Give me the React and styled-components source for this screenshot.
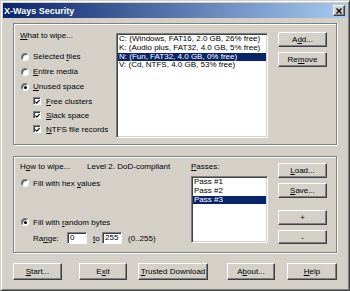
import React from 'react';
import styled, { createGlobalStyle } from 'styled-components';

const GlobalStyle = createGlobalStyle`
  html, body {
    margin: 0;
    padding: 0;
    background: #d4d0c8;
  }
  body {
    font-family: "Liberation Sans", Arial, sans-serif;
    font-size: 8px;
    color: #000;
  }
  u { text-underline-offset: 1px; }
`;

const drives = [
  'C: (Windows, FAT16, 2.0 GB, 26% free)',
  'K: (Audio plus, FAT32, 4.0 GB, 5% free)',
  'N: (Fun, FAT32, 4.0 GB, 0% free)',
  'V: (Cd, NTFS, 4.0 GB, 53% free)',
];

const passes = ['Pass #1', 'Pass #2', 'Pass #3'];

export default function App() {
  return (
    <>
      <GlobalStyle />
      <Window>
        <TitleBar>
          <span>X-Ways Security</span>
          <CloseButton>
            <svg width="6" height="6" viewBox="0 0 6 6">
              <path d="M0.5 0.5 L5.5 5.5 M5.5 0.5 L0.5 5.5" stroke="#000" strokeWidth="1.3" />
            </svg>
          </CloseButton>
        </TitleBar>

        <Body>
          <Group $h={122} $pt={7} $cols="86px 152px 49px">
            <Column>
              <Caption><u>W</u>hat to wipe...</Caption>
              <OptionList $mt={8}>
                <OptionRow $h={15}><RadioMark /><span>Selected <u>f</u>iles</span></OptionRow>
                <OptionRow $h={15}><RadioMark /><span><u>E</u>ntire media</span></OptionRow>
                <OptionRow $h={15}><RadioMark $on /><span><u>U</u>nused space</span></OptionRow>
                <OptionRow $h={14} $indent><CheckMark /><span><u>F</u>ree clusters</span></OptionRow>
                <OptionRow $h={14} $indent><CheckMark /><span><u>S</u>lack space</span></OptionRow>
                <OptionRow $h={14} $indent><CheckMark /><span><u>N</u>TFS file records</span></OptionRow>
              </OptionList>
            </Column>

            <ListBox $mt={2} $h={105}>
              {drives.map((d, i) => (
                <ListItem key={d} $selected={i === 2}>{d}</ListItem>
              ))}
            </ListBox>

            <Column>
              <Button $mt={1}>A<u>d</u>d...</Button>
              <Button $mt={5}>Re<u>m</u>ove</Button>
            </Column>
          </Group>

          <Group $h={97} $pt={5} $cols="161px 77px 49px" $mt={11}>
            <Column>
              <HeaderRow>
                <HeaderLabel>H<u>o</u>w to wipe...</HeaderLabel>
                <span>Level 2. DoD-compliant</span>
              </HeaderRow>
              <OptionRow $h={12} $mt={5}><RadioMark /><span>Fill with hex <u>v</u>alues</span></OptionRow>
              <OptionRow $h={12} $mt={27}><RadioMark $on /><span>Fill with <u>r</u>andom bytes</span></OptionRow>
              <RangeRow>
                <RangeLabel>Ra<u>n</u>ge:</RangeLabel>
                <NumberBox>0</NumberBox>
                <ToLabel><u>t</u>o</ToLabel>
                <NumberBox>255</NumberBox>
                <Hint>(0..255)</Hint>
              </RangeRow>
            </Column>

            <Column>
              <Caption><u>P</u>asses:</Caption>
              <ListBox $mt={4} $h={67}>
                {passes.map((p, i) => (
                  <ListItem key={p} $selected={i === 2}>{p}</ListItem>
                ))}
              </ListBox>
            </Column>

            <Column>
              <Button $mt={1}><u>L</u>oad...</Button>
              <Button $mt={5}><u>S</u>ave...</Button>
              <Button $mt={12}>+</Button>
              <Button $mt={5} $h={14}>-</Button>
            </Column>
          </Group>

          <ButtonRow>
            <Button $h={17} $w={49}><u>S</u>tart...</Button>
            <Button $h={17} $w={48} $ml={17}>E<u>x</u>it</Button>
            <Button $h={17} $w={70} $ml={11}><u>T</u>rusted Download</Button>
            <Button $h={17} $w={48} $ml={19}>A<u>b</u>out...</Button>
            <Button $h={17} $w={50} $ml={12}><u>H</u>elp</Button>
          </ButtonRow>
        </Body>
      </Window>
    </>
  );
}

function CheckMark() {
  return (
    <CheckBox>
      <svg width="6" height="6" viewBox="0 0 6 6">
        <polyline points="0.5,2.5 2.2,4.3 5.5,0.8" fill="none" stroke="#000" strokeWidth="1.4" />
      </svg>
    </CheckBox>
  );
}

const Window = styled.div`
  box-sizing: border-box;
  width: 350px;
  height: 291px;
  background: #d4d0c8;
  border: 1px solid;
  border-color: #d4d0c8 #404040 #404040 #d4d0c8;
  box-shadow: inset 1px 1px #fff, inset -1px -1px #808080;
  padding: 2px;
  display: flex;
  flex-direction: column;
`;

const TitleBar = styled.div`
  height: 15px;
  display: flex;
  align-items: center;
  justify-content: space-between;
  padding: 0 2px 0 1px;
  background: linear-gradient(to right, #0a246a, #a6caf0);
  color: #fff;
  font-weight: bold;
  font-size: 9px;
`;

const CloseButton = styled.div`
  box-sizing: border-box;
  width: 12px;
  height: 11px;
  display: flex;
  align-items: center;
  justify-content: center;
  background: #d4d0c8;
  border: 1px solid;
  border-color: #fff #404040 #404040 #fff;
  box-shadow: inset -1px -1px #808080;
`;

const Body = styled.div`
  padding: 5px 10px 0 10px;
  display: flex;
  flex-direction: column;
`;

const Group = styled.div`
  box-sizing: border-box;
  height: ${p => p.$h}px;
  margin-top: ${p => p.$mt || 0}px;
  padding: ${p => p.$pt}px 9px 0 6px;
  border: 1px solid #808080;
  box-shadow: inset 1px 1px #fff, 1px 1px #fff;
  display: grid;
  grid-template-columns: ${p => p.$cols};
  column-gap: 10px;
  align-items: start;
`;

const Column = styled.div`
  display: flex;
  flex-direction: column;
`;

const Caption = styled.div`
  height: 10px;
  line-height: 10px;
  white-space: nowrap;
`;

const OptionList = styled.div`
  display: flex;
  flex-direction: column;
  margin-top: ${p => p.$mt || 0}px;
`;

const OptionRow = styled.div`
  height: ${p => p.$h}px;
  margin-top: ${p => p.$mt || 0}px;
  padding-left: ${p => (p.$indent ? 13 : 1)}px;
  display: flex;
  align-items: center;
  gap: ${p => (p.$indent ? 5 : 4)}px;
  white-space: nowrap;
`;

const RadioMark = styled.span`
  box-sizing: border-box;
  flex: none;
  width: 8px;
  height: 8px;
  border-radius: 50%;
  background: #fff;
  border: 1px solid;
  border-color: #808080 #fff #fff #808080;
  box-shadow: inset 1px 1px #404040, 0 0 0 0.5px #d4d0c8;
  display: flex;
  align-items: center;
  justify-content: center;

  &::after {
    content: '';
    width: 3px;
    height: 3px;
    border-radius: 50%;
    margin: 1px 0 0 1px;
    background: ${p => (p.$on ? '#000' : 'transparent')};
  }
`;

const CheckBox = styled.span`
  box-sizing: border-box;
  flex: none;
  width: 8px;
  height: 8px;
  background: #fff;
  border: 1px solid;
  border-color: #808080 #fff #fff #808080;
  box-shadow: inset 1px 1px #404040;
  display: flex;
  align-items: center;
  justify-content: center;
  padding: 1px 0 0 1px;
`;

const ListBox = styled.div`
  box-sizing: border-box;
  height: ${p => p.$h}px;
  margin-top: ${p => p.$mt || 0}px;
  background: #fff;
  border: 1px solid;
  border-color: #808080 #fff #fff #808080;
  box-shadow: inset 1px 1px #404040, inset -1px -1px #d4d0c8;
  padding: 1px;
  overflow: hidden;
`;

const ListItem = styled.div`
  height: 8.8px;
  line-height: 8.8px;
  padding-left: 1px;
  white-space: nowrap;
  background: ${p => (p.$selected ? '#0a246a' : 'transparent')};
  color: ${p => (p.$selected ? '#fff' : '#000')};
`;

const Button = styled.button`
  box-sizing: border-box;
  flex: none;
  width: ${p => p.$w || 49}px;
  height: ${p => p.$h || 15}px;
  margin: ${p => p.$mt || 0}px 0 0 ${p => p.$ml || 0}px;
  padding: 0;
  font: inherit;
  color: #000;
  white-space: nowrap;
  background: #d4d0c8;
  border: 1px solid;
  border-color: #fff #404040 #404040 #fff;
  box-shadow: inset -1px -1px #808080;
`;

const HeaderRow = styled.div`
  height: 10px;
  line-height: 10px;
  display: flex;
  white-space: nowrap;
`;

const HeaderLabel = styled.span`
  width: 67px;
`;

const RangeRow = styled.div`
  height: 12px;
  margin-top: 4px;
  padding-left: 13px;
  display: flex;
  align-items: center;
  white-space: nowrap;
`;

const RangeLabel = styled.span`
  width: 34px;
`;

const NumberBox = styled.div`
  box-sizing: border-box;
  width: 20px;
  height: 12px;
  line-height: 10px;
  padding-left: 2px;
  background: #fff;
  border: 1px solid;
  border-color: #808080 #fff #fff #808080;
  box-shadow: inset 1px 1px #404040;
`;

const ToLabel = styled.span`
  width: 15px;
  padding-left: 6px;
  box-sizing: border-box;
`;

const Hint = styled.span`
  margin-left: 6px;
`;

const ButtonRow = styled.div`
  display: flex;
  margin-top: 10px;
`;
